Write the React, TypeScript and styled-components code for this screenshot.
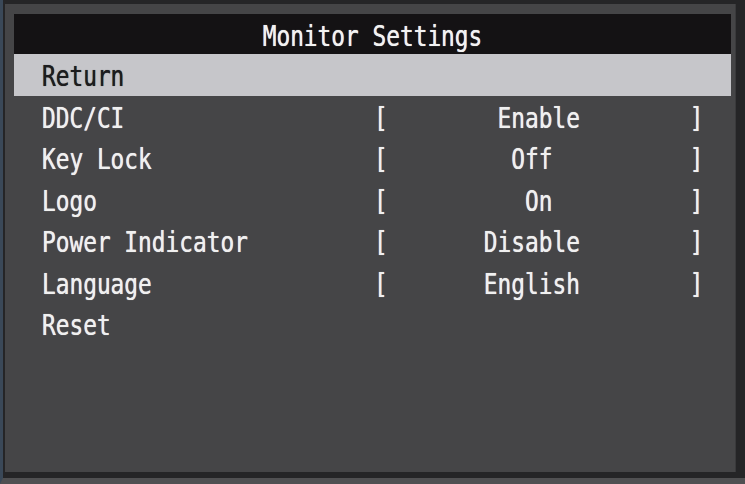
import React from "react";
import styled, { createGlobalStyle } from "styled-components";

const Global = createGlobalStyle`
  html, body { margin: 0; padding: 0; background: #262628; }
  #root { width: 745px; height: 484px; }
`;

const Screen = styled.div`
  box-sizing: border-box;
  width: 745px;
  height: 484px;
  background: #252527;
  border-left: 3px solid #3a4858;
  border-bottom: 6px solid #505052;
  padding: 4px 9px 6px 2px;
  display: flex;
  font-family: "DejaVu Sans Mono", "Liberation Mono", monospace;
  font-size: 22.8px;
`;

const Panel = styled.div`
  flex: 1;
  background: #454547;
  padding: 10px 5px 0 9px;
  display: flex;
  flex-direction: column;
  box-shadow: inset -1px 0 0 #3a3a3c;
`;

const TitleBar = styled.div`
  height: 40px;
  background: #141214;
  color: #f2f2f2;
  display: flex;
  align-items: center;
  justify-content: center;
`;

const Glyphs = styled.span`
  display: inline-block;
  white-space: pre;
  line-height: 1;
  transform: translateY(1.5px) scaleY(1.28);
  text-shadow: 0 0 0.6px currentColor;
`;

const Row = styled.div<{ $selected?: boolean }>`
  height: 41.5px;
  display: grid;
  grid-template-columns: 332px 1ch 22ch 1ch;
  align-items: center;
  padding-left: 28px;
  background: ${(p) => (p.$selected ? "#c6c6ca" : "transparent")};
  color: ${(p) => (p.$selected ? "#1c1c1e" : "#f0f0f0")};
`;

const Label = styled(Glyphs)`
  justify-self: start;
`;

const Value = styled(Glyphs)<{ $pad: number }>`
  padding-left: ${(p) => p.$pad}ch;
  justify-self: start;
`;

const items: { label: string; value?: string }[] = [
  { label: "DDC/CI", value: "Enable" },
  { label: "Key Lock", value: "Off" },
  { label: "Logo", value: "On" },
  { label: "Power Indicator", value: "Disable" },
  { label: "Language", value: "English" },
  { label: "Reset" },
];

export default function App() {
  return (
    <>
      <Global />
      <Screen>
        <Panel>
          <TitleBar>
            <Glyphs>Monitor Settings</Glyphs>
          </TitleBar>
          <Row $selected>
            <Label>Return</Label>
          </Row>
          {items.map((it) => (
            <Row key={it.label}>
              <Label>{it.label}</Label>
              {it.value !== undefined && (
                <>
                  <Glyphs>[</Glyphs>
                  <Value $pad={Math.floor((22 - it.value.length) / 2)}>{it.value}</Value>
                  <Glyphs>]</Glyphs>
                </>
              )}
            </Row>
          ))}
        </Panel>
      </Screen>
    </>
  );
}
